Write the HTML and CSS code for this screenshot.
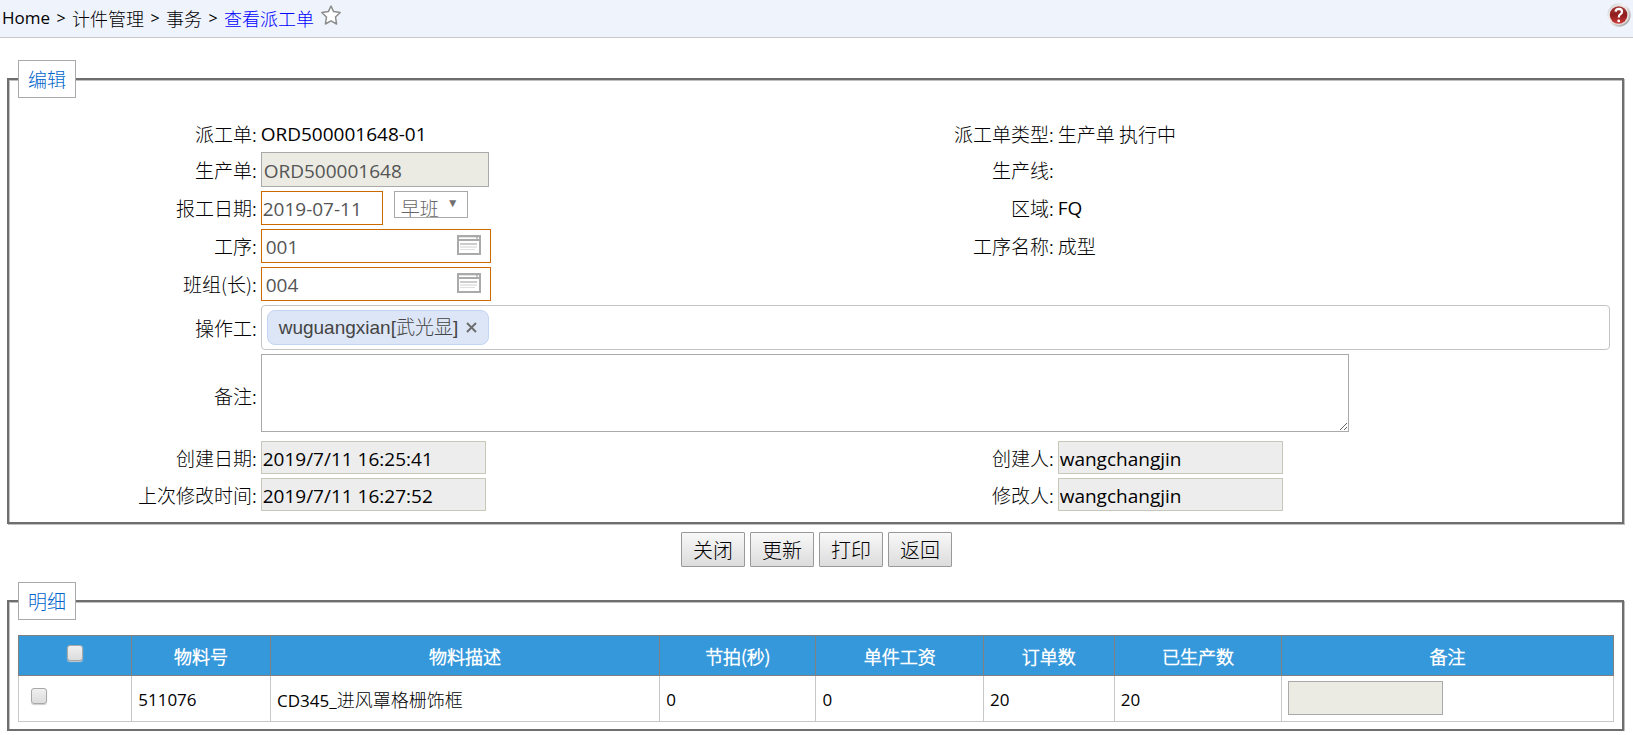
FILE: index.html
```html
<!DOCTYPE html>
<html lang="zh-CN">
<head>
<meta charset="utf-8">
<title>查看派工单</title>
<link rel="stylesheet" href="styles.css">
</head>
<body>
<header class="topbar">
  <nav class="crumbs" aria-label="breadcrumb">
    <span class="latin">Home</span><span class="sep">&gt;</span><span>计件管理</span><span class="sep">&gt;</span><span>事务</span><span class="sep">&gt;</span><a class="current" href="#">查看派工单</a>
    <button class="icon-btn star" type="button" aria-label="收藏">
      <svg width="20" height="20" viewBox="0 0 20 20"><path d="M10 1 L12.6 6.6 L19.2 7.5 L14.5 12 L15.6 19 L10 15.8 L4.4 19 L5.5 12 L0.8 7.5 L7.4 6.6 Z" fill="#fff" stroke="#8c8c8c" stroke-width="1.5" stroke-linejoin="round"/></svg>
    </button>
  </nav>
  <button class="icon-btn help" type="button" aria-label="帮助">
    <svg width="24" height="24" viewBox="0 0 24 24">
      <defs>
        <linearGradient id="ring" x1="0" y1="0" x2="1" y2="1"><stop offset="0" stop-color="#c4c8cc"/><stop offset=".4" stop-color="#f6f4f2"/><stop offset="1" stop-color="#8f8f8f"/></linearGradient>
        <linearGradient id="disc" x1="0" y1="0" x2="0" y2="1"><stop offset="0" stop-color="#a63a3a"/><stop offset=".5" stop-color="#8e1c1c"/><stop offset="1" stop-color="#cf3a3a"/></linearGradient>
      </defs>
      <circle cx="12" cy="12" r="11.7" fill="url(#ring)"/>
      <circle cx="12" cy="12" r="10" fill="#e9e2e0"/>
      <circle cx="11.6" cy="12" r="8.8" fill="url(#disc)"/>
      <path d="M8.4 8.6 Q9.2 5.9 11.9 5.9 Q15 6 15 8.7 Q15 10.4 13.2 11.4 Q11.8 12.3 11.8 14.4" fill="none" stroke="#fff" stroke-width="2.2"/>
      <circle cx="11.7" cy="17.9" r="1.4" fill="#fff"/>
    </svg>
  </button>
</header>

<main>
<form>
<fieldset class="panel">
  <legend>编辑</legend>
  <div class="form-grid">
    <span class="label">派工单:</span><span class="value latin">ORD500001648-01</span>
    <span class="label">派工单类型:</span><span class="value">生产单 执行中</span>

    <label class="label" for="order">生产单:</label>
    <div><input class="text locked" id="order" value="ORD500001648" disabled></div>
    <span class="label">生产线:</span><span class="value"></span>

    <label class="label" for="date">报工日期:</label>
    <div class="date-row">
      <input class="text required date" id="date" value="2019-07-11">
      <span class="select-box"><select aria-label="班次"><option>早班</option></select></span>
    </div>
    <span class="label">区域:</span><span class="value latin">FQ</span>

    <label class="label" for="op">工序:</label>
    <div class="lookup">
      <input class="lookup-input" id="op" value="001">
      <button class="icon-btn" type="button" aria-label="选择工序"><svg width="24" height="20" viewBox="0 0 24 20"><rect x="1" y="1" width="22" height="18" fill="#fff" stroke="#aaa" stroke-width="2"/><path d="M2 2.5H22" stroke="#e4e4e4"/><path d="M2 5H22" stroke="#aaa" stroke-width="2"/><path d="M20 1V4" stroke="#999"/><path d="M3 9H20" stroke="#999"/><path d="M3 12H20" stroke="#d0d0d0"/><path d="M3 14.5H18" stroke="#e0e0e0"/></svg></button>
    </div>
    <span class="label">工序名称:</span><span class="value">成型</span>

    <label class="label" for="team">班组(长):</label>
    <div class="lookup">
      <input class="lookup-input" id="team" value="004">
      <button class="icon-btn" type="button" aria-label="选择班组"><svg width="24" height="20" viewBox="0 0 24 20"><rect x="1" y="1" width="22" height="18" fill="#fff" stroke="#aaa" stroke-width="2"/><path d="M2 2.5H22" stroke="#e4e4e4"/><path d="M2 5H22" stroke="#aaa" stroke-width="2"/><path d="M20 1V4" stroke="#999"/><path d="M3 9H20" stroke="#999"/><path d="M3 12H20" stroke="#d0d0d0"/><path d="M3 14.5H18" stroke="#e0e0e0"/></svg></button>
    </div>
    <span class="label"></span><span class="value"></span>

    <span class="label">操作工:</span>
    <div class="tags wide">
      <span class="tag">wuguangxian[武光显]
        <button class="tag-close" type="button" aria-label="移除"><svg width="11" height="11" viewBox="0 0 11 11"><path d="M1 1L10 10M10 1L1 10" stroke="#6e6e6e" stroke-width="2"/></svg></button>
      </span>
    </div>

    <label class="label" for="note">备注:</label>
    <div class="wide note-row"><textarea id="note"></textarea></div>

    <label class="label" for="created">创建日期:</label>
    <div><input class="text readonly" id="created" value="2019/7/11 16:25:41" readonly></div>
    <label class="label" for="creator">创建人:</label>
    <div><input class="text readonly" id="creator" value="wangchangjin" readonly></div>

    <label class="label" for="modified">上次修改时间:</label>
    <div><input class="text readonly" id="modified" value="2019/7/11 16:27:52" readonly></div>
    <label class="label" for="modifier">修改人:</label>
    <div><input class="text readonly" id="modifier" value="wangchangjin" readonly></div>
  </div>
</fieldset>

<div class="actions">
  <button class="btn" type="button">关闭</button>
  <button class="btn" type="button">更新</button>
  <button class="btn" type="button">打印</button>
  <button class="btn" type="button">返回</button>
</div>

<fieldset class="panel detail">
  <legend>明细</legend>
  <table class="items">
    <colgroup><col class="c-check"><col class="c-no"><col class="c-desc"><col class="c-beat"><col class="c-wage"><col class="c-order"><col class="c-done"><col></colgroup>
    <thead>
      <tr><th><input class="check" type="checkbox" aria-label="全选"></th><th>物料号</th><th>物料描述</th><th>节拍(秒)</th><th>单件工资</th><th>订单数</th><th>已生产数</th><th>备注</th></tr>
    </thead>
    <tbody>
      <tr><td class="check-cell"><input class="check" type="checkbox" aria-label="选择"></td><td class="num">511076</td><td><span class="num">CD345_</span>进风罩格栅饰框</td><td class="num">0</td><td class="num">0</td><td class="num">20</td><td class="num">20</td><td class="remark"><input class="text locked" aria-label="备注" disabled></td></tr>
    </tbody>
  </table>
</fieldset>
</form>
</main>
</body>
</html>
```
FILE: styles.css
```css
* { box-sizing: border-box; }

body {
  margin: 0;
  background: #fff;
  color: #000;
  font-family: "Noto Sans CJK SC Light", "Noto Sans CJK SC", sans-serif;
  font-weight: 300;
  font-size: 19px;
  line-height: 28px;
}

input, select, textarea, button { font: inherit; margin: 0; }

.latin { font-family: "Open Sans", "Noto Sans CJK SC", sans-serif; font-weight: 400; }
.num { font-family: "Open Sans", "Noto Sans CJK SC", sans-serif; font-weight: 400; font-size: 17px; }

.topbar {
  display: flex;
  justify-content: space-between;
  align-items: flex-start;
  height: 38px;
  padding: 3px 2px 0;
  background: #eef3fc;
  border-bottom: 1px solid #c8c8c8;
}

.crumbs { display: flex; align-items: flex-start; font-size: 18px; line-height: 30px; }
.crumbs .latin { font-size: 17px; }
.sep { width: 22px; text-align: center; font-family: "Open Sans", sans-serif; font-size: 16px; font-weight: 400; }
.current { color: #00f; text-decoration: none; }

.icon-btn {
  display: block;
  padding: 0;
  border: 0;
  background: none;
  line-height: 0;
}
.star { margin: 2px 0 0 7px; }

.panel {
  min-width: 0;
  margin: 22px 9px 0 7px;
  padding: 22px 8px 11px 9px;
  border: 2px solid #6e6e6e;
  box-shadow: 1px 1px 0 #c0c0c0, inset 1px 1px 0 #c0c0c0;
}
.panel.detail { margin-top: 15px; padding-top: 15px; padding-bottom: 7px; }

legend {
  padding: 4px 9px;
  border: 1px solid #a9a9a9;
  background: #fff;
  color: #06c;
}

.form-grid {
  display: grid;
  grid-template-columns: 15fr 35fr 15fr 35fr;
  gap: 4px;
  align-items: center;
  padding: 0 4px 0 2px;
}
.form-grid > div { display: flex; }
.form-grid > .wide { grid-column: 2 / -1; }
.label { text-align: right; }

.text {
  width: 228px;
  height: 35px;
  padding: 2px 2px 0;
  border: 1px solid #a9a9a9;
  border-radius: 0;
  background: #fff;
  color: #555;
  font-family: "Open Sans", "Noto Sans CJK SC", sans-serif;
  font-weight: 400;
  font-size: 19px;
  line-height: 28px;
}
.locked { background: #ebebe4; }
.required { border-color: #cc6a00; }
.date { width: 122px; height: 34px; padding: 2px 1px 0; }
.readonly { width: 225px; height: 33px; padding: 2px 1px 0; border-color: #c8c8ba; background: #ededed; color: #000; }

.date-row { align-items: flex-start; gap: 11px; }

.select-box { position: relative; display: block; }
.select-box::after {
  content: "▼";
  position: absolute;
  top: 2px;
  right: 9px;
  color: #707070;
  font-family: "DejaVu Sans", sans-serif;
  font-size: 12px;
  line-height: 20px;
  pointer-events: none;
}
select {
  display: block;
  appearance: none;
  width: 74px;
  height: 27px;
  padding: 4px 6px 0;
  border: 1px solid #a9a9a9;
  border-radius: 0;
  background: #fff;
  color: #666;
  line-height: 24px;
}

.form-grid > .lookup {
  justify-content: space-between;
  align-items: flex-start;
  width: 230px;
  height: 34px;
  padding: 0 9px 0 4px;
  border: 1px solid #cc6a00;
}
.lookup .icon-btn { margin-top: 5px; }
.lookup-input {
  width: 180px;
  height: 32px;
  padding: 2px 0 0;
  border: 0;
  background: none;
  color: #555;
  font-family: "Open Sans", sans-serif;
  font-weight: 400;
}

.tags { padding: 4px 5px; border: 1px solid #c4c4c4; border-radius: 4px; }
.tag {
  display: flex;
  align-items: center;
  gap: 8px;
  height: 35px;
  padding: 0 11px;
  border: 1px solid #c3d5f3;
  border-radius: 8px;
  background: #dde6f7;
  color: #444;
  font-family: "Liberation Sans", "Noto Sans CJK SC Light", "Noto Sans CJK SC", sans-serif;
  line-height: 33px;
}
.tag-close { padding: 0; border: 0; background: none; line-height: 0; }

.note-row { padding-bottom: 5px; }
textarea {
  width: 1088px;
  max-width: 100%;
  height: 78px;
  border: 1px solid #a9a9a9;
  background: #fff;
}

.actions { display: flex; justify-content: center; gap: 5px; margin-top: 8px; }
.btn {
  height: 35px;
  padding: 0 11px;
  border: 1px solid #999;
  border-radius: 1px;
  background: linear-gradient(#f8f8f8, #dcdcdc);
  color: #000;
  font-size: 20px;
  line-height: 32px;
}

.items { width: 100%; table-layout: fixed; border-collapse: collapse; font-size: 18px; }
.c-check { width: 7.1%; }
.c-no { width: 8.7%; }
.c-desc { width: 24.4%; }
.c-beat { width: 9.8%; }
.c-wage { width: 10.5%; }
.c-order { width: 8.2%; }
.c-done { width: 10.5%; }
.items th {
  height: 40px;
  padding: 0 6px;
  border: 1px solid #808080;
  background: #3498db;
  color: #fff;
  font-weight: 700;
}
.items td { height: 46px; padding: 2px 6px 0; border: 1px solid #c8c8c8; }
.items .check-cell { padding: 0 12px 6px; }
.items .remark { padding: 0 6px 2px; }
.remark .text { display: block; width: 155px; height: 34px; }

.check {
  display: block;
  appearance: none;
  width: 16px;
  height: 16px;
  border: 1px solid #a8a8a8;
  border-radius: 3px;
  background: linear-gradient(#f0f0f0, #dcdcdc);
  box-shadow: 0 1px 1px #ccc;
}
th .check { margin: 0 auto 5px; }
```
